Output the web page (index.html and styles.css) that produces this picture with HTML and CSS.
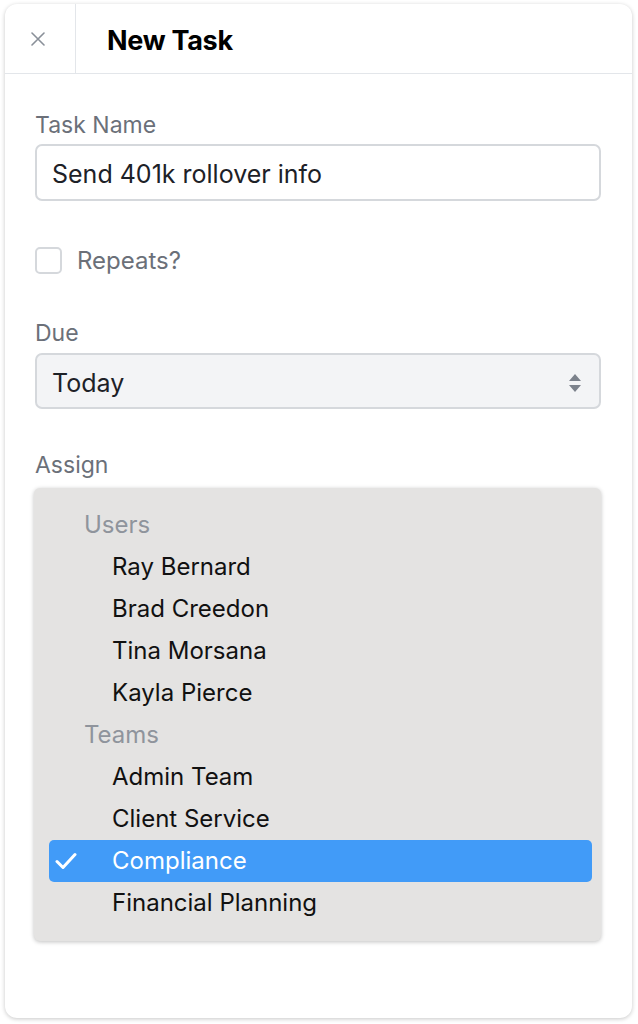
FILE: index.html
```html
<!DOCTYPE html>
<html lang="en">
<head>
    <meta charset="UTF-8">
    <title>New Task</title>
    <link rel="stylesheet" href="styles.css">
</head>
<body>
    <div class="card">
        <div class="header">
            <div class="close">
                <svg width="14" height="14" viewBox="0 0 14 14"><path d="M1 1L13 13M13 1L1 13" stroke="#8a9099" stroke-width="1.6" stroke-linecap="round"/></svg>
            </div>
            <h1 class="title">New Task</h1>
        </div>
        <div class="body">
            <label class="label">Task Name</label>
            <div class="input">Send 401k rollover info</div>

            <div class="check-row">
                <span class="checkbox"></span>
                <span class="check-label">Repeats?</span>
            </div>

            <label class="label">Due</label>
            <div class="select">
                <span>Today</span>
                <svg width="14" height="20" viewBox="0 0 14 20"><path d="M7 1L13 8H1Z M7 19L1 12H13Z" fill="#7c828c"/></svg>
            </div>

            <label class="label assign">Assign</label>
            <div class="menu">
                <div class="group">Users</div>
                <div class="item">Ray Bernard</div>
                <div class="item">Brad Creedon</div>
                <div class="item">Tina Morsana</div>
                <div class="item">Kayla Pierce</div>
                <div class="group">Teams</div>
                <div class="item">Admin Team</div>
                <div class="item">Client Service</div>
                <div class="item selected">
                    <svg class="tick" width="22" height="18" viewBox="0 0 22 18"><path d="M2 9.5L8 15.5L20 2.5" fill="none" stroke="#fff" stroke-width="3" stroke-linecap="round" stroke-linejoin="round"/></svg>
                    Compliance
                </div>
                <div class="item">Financial Planning</div>
            </div>
        </div>
    </div>
</body>
</html>
```

FILE: styles.css
```css
* {
    margin: 0;
    padding: 0;
    box-sizing: border-box;
}

body {
    background: #fff;
    font-family: Inter, "Noto Sans", sans-serif;
    padding: 4px 6px 6px 5px;
}

.card {
    height: 1014px;
    border-radius: 12px;
    background: #fff;
    box-shadow: 0 1px 4px rgba(0, 0, 0, 0.22);
    overflow: hidden;
}

.header {
    display: flex;
    height: 70px;
    border-bottom: 1px solid #e3e6ea;
}

.close {
    width: 71px;
    border-right: 1px solid #e3e6ea;
    display: flex;
    align-items: center;
    justify-content: center;
    padding-right: 4px;
}

.title {
    font-size: 27px;
    font-weight: 700;
    color: #000;
    line-height: 70px;
    padding: 2px 0 0 31px;
    letter-spacing: -0.3px;
}

.body {
    padding: 37px 31px 0 30px;
}

.label {
    display: block;
    font-size: 23px;
    color: #6b7079;
    line-height: 28px;
    margin-bottom: 6px;
}

.input {
    height: 57px;
    border: 2px solid #d5d8dc;
    border-radius: 7px;
    font-size: 25px;
    color: #1d2127;
    padding: 3px 15px 0;
    display: flex;
    align-items: center;
    margin-top: -1px;
}

.check-row {
    display: flex;
    align-items: center;
    margin: 45px 0 44px;
}

.checkbox {
    width: 27px;
    height: 27px;
    border: 2px solid #d5d8dc;
    border-radius: 5px;
}

.check-label {
    font-size: 24px;
    color: #6b7079;
    margin-left: 15px;
}

.select {
    height: 56px;
    border: 2px solid #d5d8dc;
    border-radius: 7px;
    background: #f3f4f6;
    font-size: 25px;
    color: #1d2127;
    padding: 3px 17px 0 15px;
    display: flex;
    align-items: center;
    justify-content: space-between;
}

.assign {
    margin-top: 42px;
    margin-bottom: 9px;
}

.menu {
    margin-left: -1px;
    width: 567px;
    background: #e4e3e2;
    border-radius: 6px;
    box-shadow: 0 1px 4px rgba(0, 0, 0, 0.25);
    padding: 16px 9px 17px 15px;
}

.group {
    font-size: 24px;
    color: #8f949c;
    line-height: 42px;
    padding-left: 35px;
}

.item {
    position: relative;
    font-size: 24px;
    color: #111;
    line-height: 42px;
    padding-left: 63px;
    border-radius: 5px;
}

.item.selected {
    background: #419bf8;
    color: #fff;
}

.tick {
    position: absolute;
    left: 6px;
    top: 12px;
}
```
